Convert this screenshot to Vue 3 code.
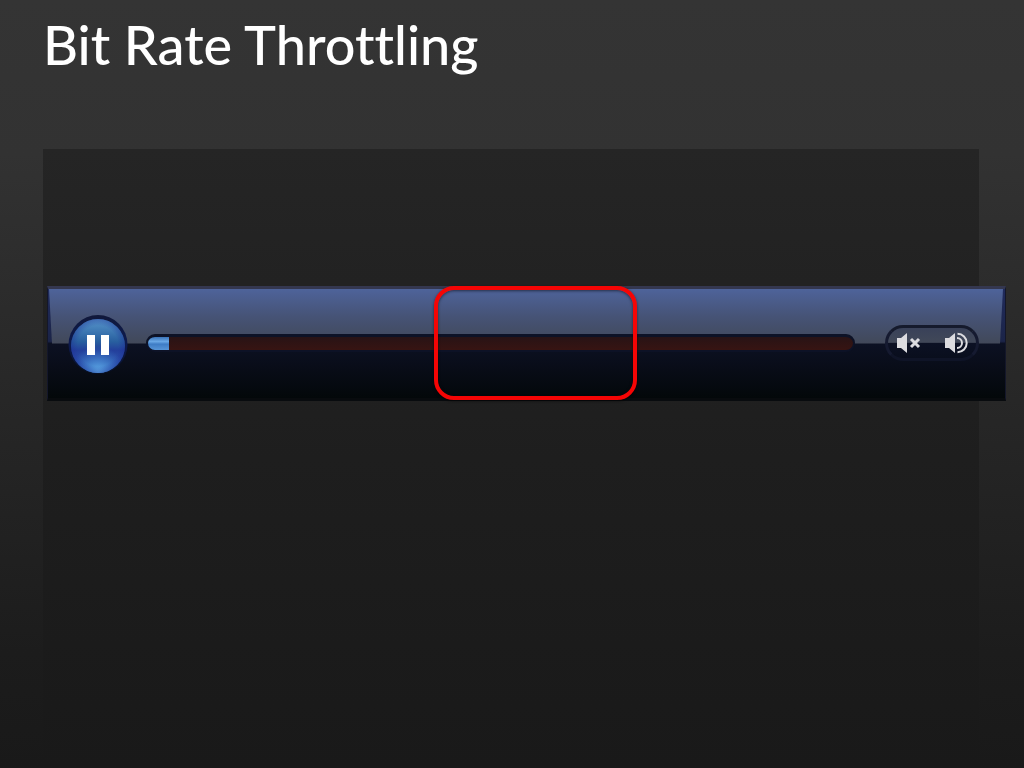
<script setup>
import { ref } from 'vue'

const playing = ref(true)
const progress = ref(3)
</script>

<template>
  <main class="slide">
    <h1>Bit Rate Throttling</h1>
    <section class="stage">
      <div class="player">
        <button class="toggle" type="button" :aria-label="playing ? 'Pause' : 'Play'" @click="playing = !playing">
          <svg viewBox="0 0 60 60" aria-hidden="true">
            <defs>
              <linearGradient id="ball" x1="0" y1="0" x2="0" y2="1">
                <stop offset="0" stop-color="#5796cb" />
                <stop offset=".42" stop-color="#285f9f" />
                <stop offset=".58" stop-color="#233f9b" />
                <stop offset="1" stop-color="#3568bd" />
              </linearGradient>
              <radialGradient id="shine" cx=".5" cy="1" r=".5">
                <stop offset="0" stop-color="#65b5ed" />
                <stop offset="1" stop-color="#3c80cf" stop-opacity="0" />
              </radialGradient>
              <radialGradient id="side" cx=".5" cy=".5" r=".5">
                <stop offset=".75" stop-color="#1f2c9b" stop-opacity="0" />
                <stop offset="1" stop-color="#1c2b91" stop-opacity=".4" />
              </radialGradient>
              <linearGradient id="rim" x1="0" y1="0" x2="0" y2="1">
                <stop offset="0" stop-color="#10183a" />
                <stop offset=".5" stop-color="#0d1a50" />
                <stop offset="1" stop-color="#071026" />
              </linearGradient>
            </defs>
            <circle cx="30" cy="29.5" r="29.5" fill="url(#rim)" />
            <circle cx="30" cy="31" r="27" fill="url(#ball)" />
            <circle cx="30" cy="31" r="27" fill="url(#shine)" />
            <circle cx="30" cy="31" r="27" fill="url(#side)" />
            <path v-if="playing" d="M19 20h8v20h-8zM33 20h8v20h-8z" fill="#fff" />
            <path v-else d="M22 18v24l20-12z" fill="#fff" />
          </svg>
        </button>
        <input
          v-model.number="progress"
          class="seek"
          type="range"
          min="0"
          max="100"
          aria-label="Seek"
          :style="{ '--played': progress + '%' }"
        />
        <div class="volume">
          <button type="button" aria-label="Mute">
            <svg viewBox="0 0 26 22" aria-hidden="true">
              <path d="M1 6h4l6-5v20l-6-5H1z" fill="#dcdce0" />
              <path d="M15 7l8 8M23 7l-8 8" fill="none" stroke="#dcdce0" stroke-width="3" />
            </svg>
          </button>
          <button type="button" aria-label="Volume up">
            <svg viewBox="0 0 26 22" aria-hidden="true">
              <path d="M1 6h4l6-5v20l-6-5H1z" fill="#dcdce0" />
              <path d="M13 6a5 5 0 0 1 0 10" fill="none" stroke="#dcdce0" stroke-width="2" />
              <path d="M13.500 1.800a9.200 9.200 0 0 1 0 18.400" fill="none" stroke="#dcdce0" stroke-width="2" />
            </svg>
          </button>
        </div>
        <div class="highlight"></div>
      </div>
    </section>
  </main>
</template>

<style>
body {
  margin: 0;
  background: #191919;
}
</style>

<style scoped>
.slide {
  box-sizing: border-box;
  min-height: 100vh;
  display: flex;
  flex-direction: column;
  background: linear-gradient(#343434 0%, #323232 20%, #262626 55%, #1c1c1c 85%, #191919 100%);
  font-family: "Trebuchet MS", Lato, "Open Sans", sans-serif;
}

h1 {
  box-sizing: border-box;
  height: 149px;
  margin: 0;
  padding: 12px 43px;
  color: #fff;
  font-size: 54px;
  font-weight: 500;
  font-variant-ligatures: none;
  line-height: 66px;
}

.stage {
  flex: 1;
  margin: 0 45px 0 43px;
  padding-top: 137px;
  background: linear-gradient(#252525, #1e1e1e 50%, #191919);
}

.player {
  position: relative;
  isolation: isolate;
  box-sizing: border-box;
  height: 115px;
  display: flex;
  align-items: center;
  margin: 0 -27px 0 4px;
  padding: 0 26px 0 20px;
  border: 1px solid #14172a;
  border-top: 3px solid #34374f;
  border-bottom: 3px solid #080b0e;
  background: linear-gradient(#202b5c 0%, #1b2448 48%, #0c1123 50%, #090d19 70%, #03080a 100%);
}

.player::before {
  content: "";
  position: absolute;
  z-index: -1;
  inset: 0 0 50%;
  background: linear-gradient(#4e639a, #465376 50%, #414858);
  clip-path: polygon(1px 0, calc(100% - 2px) 0, calc(100% - 5px) 100%, 4px 100%);
}

button {
  padding: 0;
  border: 0;
  background: none;
  cursor: pointer;
}

svg {
  display: block;
  width: 100%;
  height: 100%;
}

.toggle {
  flex: none;
  width: 60px;
  height: 60px;
  margin-top: 2px;
}

.seek {
  appearance: none;
  flex: 1;
  min-width: 0;
  box-sizing: border-box;
  height: 18px;
  margin: 0 30px 2px 18px;
  border: 2px solid #0d1226;
  border-top-width: 3px;
  border-radius: 9px;
  background:
    linear-gradient(#3b73b7, #69a7e5 35%, #3e7cc5 55%, #5795d7) left / var(--played) 100% no-repeat,
    linear-gradient(#281315, #371412);
  cursor: pointer;
}

.seek::-webkit-slider-thumb {
  appearance: none;
  width: 1px;
  height: 12px;
}

.volume {
  flex: none;
  box-sizing: border-box;
  width: 94px;
  height: 36px;
  display: flex;
  align-items: center;
  justify-content: space-between;
  margin-bottom: 2px;
  padding: 0 6px 0 8px;
  border: 3px solid;
  border-color: #151a2c #151a30 #0f1427;
  border-radius: 18px;
  background: linear-gradient(#394159, #414858 48%, #0c1124 50%, #090e1d);
}

.volume button {
  width: 26px;
  height: 22px;
}

.highlight {
  position: absolute;
  top: -3px;
  bottom: -2px;
  left: 40.3%;
  width: 21.2%;
  box-sizing: border-box;
  border: 4px solid #f50505;
  border-radius: 20px;
  box-shadow: 0 1px 3px #0008, inset 0 1px 3px #0008;
  pointer-events: none;
}
</style>
